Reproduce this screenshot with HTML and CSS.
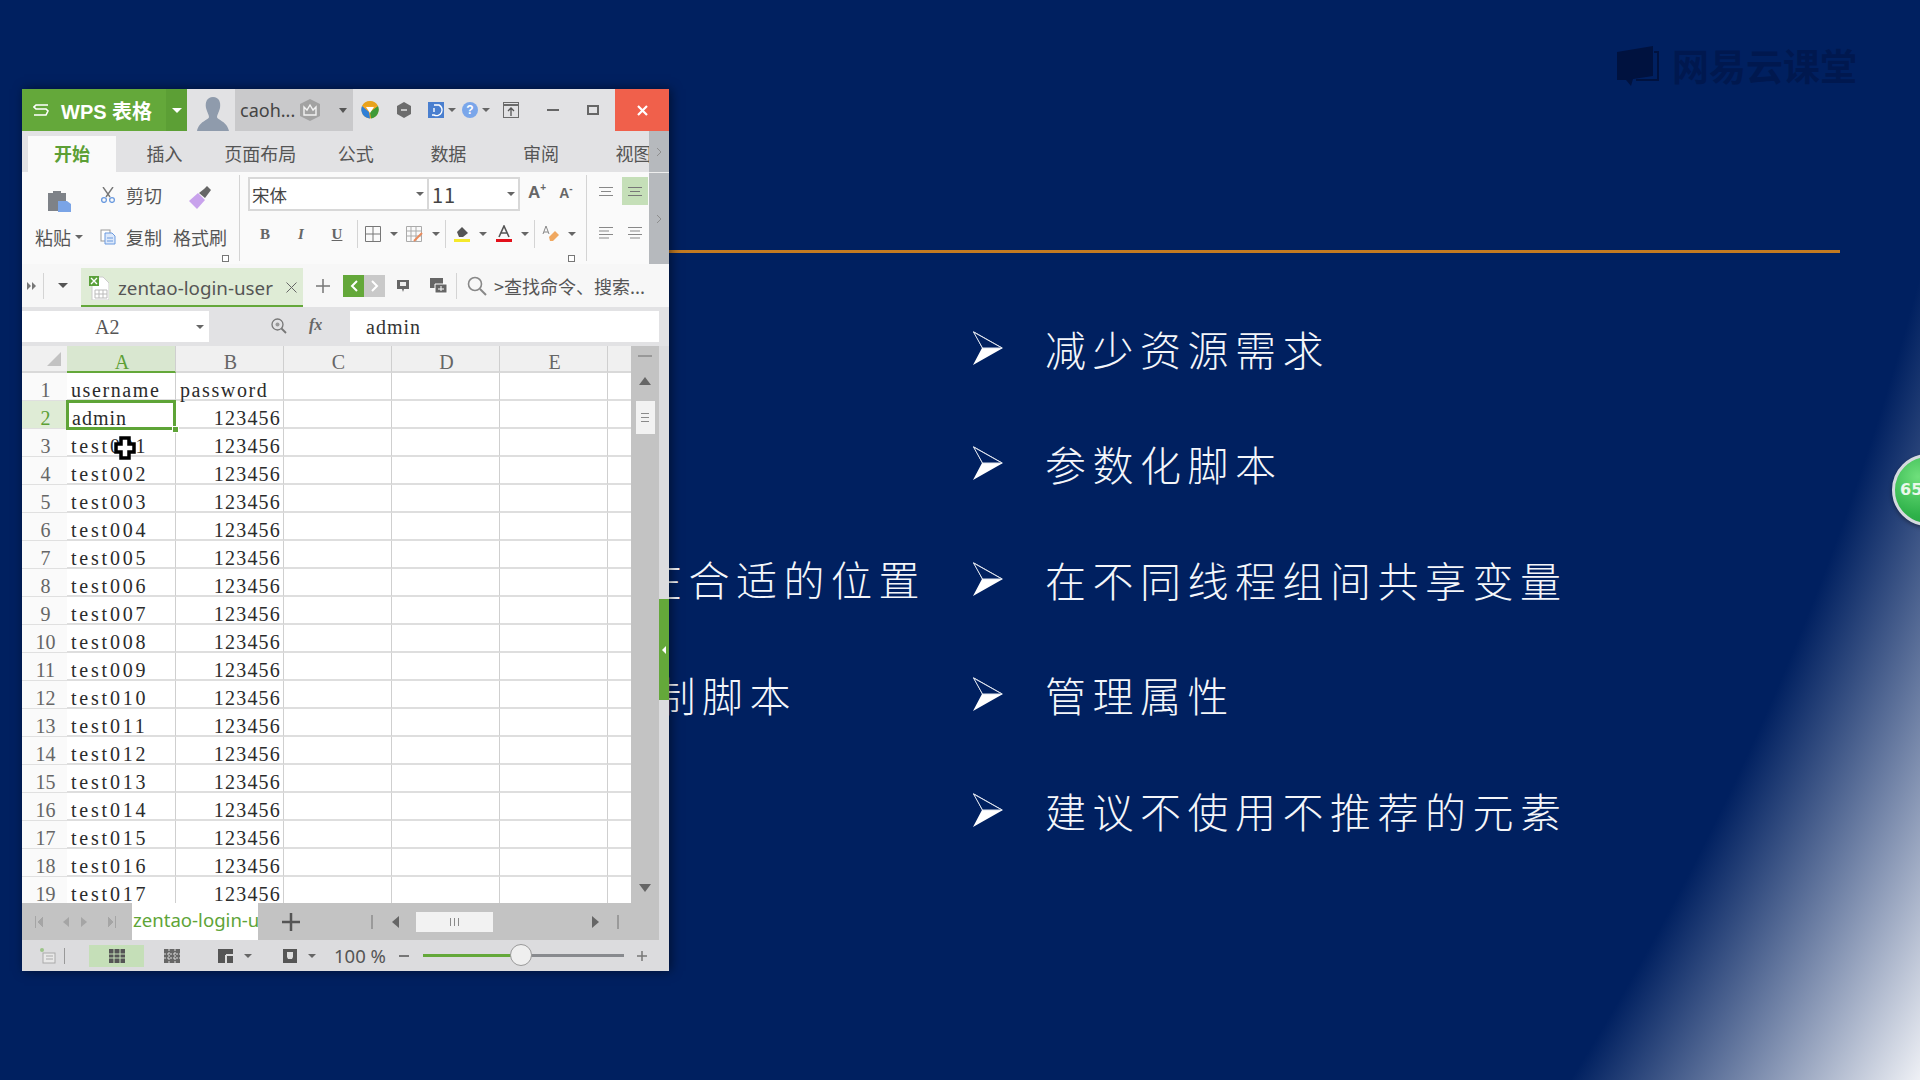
FILE: index.html
```html
<!DOCTYPE html>
<html lang="zh-CN">
<head>
  <meta charset="UTF-8">
  <title>WPS 表格</title>
  <link rel="stylesheet" href="styles.css">
</head>
<body>
<!-- Slide behind the window -->
<div class="slide">
  <div class="slide-rule"></div>
  <div class="slide-body">
    <div class="left-col">
      <div class="left-line"></div>
      <div class="left-line"></div>
      <div class="left-line">在合适的位置</div>
      <div class="left-line short">录制脚本</div>
    </div>
    <ul class="points">
      <li><svg class="arrow" viewBox="0 0 30 34"><path d="M0 0 30 17 0 34 9 17Z" fill="#fff"/><path d="M.5 1 29 17H9.500Z" fill="#002060" stroke="#dfe4ee" stroke-width="1"/></svg>减少资源需求</li>
      <li><svg class="arrow" viewBox="0 0 30 34"><path d="M0 0 30 17 0 34 9 17Z" fill="#fff"/><path d="M.5 1 29 17H9.500Z" fill="#002060" stroke="#dfe4ee" stroke-width="1"/></svg>参数化脚本</li>
      <li><svg class="arrow" viewBox="0 0 30 34"><path d="M0 0 30 17 0 34 9 17Z" fill="#fff"/><path d="M.5 1 29 17H9.500Z" fill="#002060" stroke="#dfe4ee" stroke-width="1"/></svg>在不同线程组间共享变量</li>
      <li><svg class="arrow" viewBox="0 0 30 34"><path d="M0 0 30 17 0 34 9 17Z" fill="#fff"/><path d="M.5 1 29 17H9.500Z" fill="#002060" stroke="#dfe4ee" stroke-width="1"/></svg>管理属性</li>
      <li><svg class="arrow" viewBox="0 0 30 34"><path d="M0 0 30 17 0 34 9 17Z" fill="#fff"/><path d="M.5 1 29 17H9.500Z" fill="#002060" stroke="#dfe4ee" stroke-width="1"/></svg>建议不使用不推荐的元素</li>
    </ul>
  </div>
  <div class="watermark">
    <svg width="44" height="44" viewBox="0 0 44 44"><path d="M1 9 37 3V33L17 36 15 43 10 37H1Z" fill="#00123f"/><path d="M38 9H42V37H20" fill="none" stroke="#00123f" stroke-width="2"/></svg>
    <span>网易云课堂</span>
  </div>
  <div class="ball">65</div>
</div>

<!-- WPS window -->
<div class="window">
  <div class="titlebar">
    <div class="brand">
      <svg class="brand-s" width="16" height="12" viewBox="0 0 16 12"><path d="M15 1H3L1 3 3 5H13L15 7 13 11H1" fill="none" stroke="#fff" stroke-width="1.600"/></svg>
      <span>WPS 表格</span>
    </div>
    <div class="brand-caret"><i class="caret white"></i></div>
    <div class="avatar">
      <svg width="32" height="34" viewBox="0 0 32 34"><path d="M16 0C22 0 24 5 23 11 22 15 20 18 20 20 20 23 30 24 32 34H0C2 24 12 23 12 20 12 18 10 15 9 11 8 5 10 0 16 0Z" fill="#8f9bac"/></svg>
    </div>
    <div class="user">
      <span>caoh...</span>
      <svg class="crown" width="22" height="24" viewBox="0 0 22 24"><path d="M11 1 21 6V18L11 23 1 18V6Z" fill="#a2a2a2"/><path d="M5 9 8 12 11 7 14 12 17 9V17H5Z" fill="none" stroke="#f2f2f2" stroke-width="1.400"/></svg>
      <i class="caret"></i>
    </div>
    <div class="title-tools">
      <svg class="t-color" width="18" height="18" viewBox="0 0 18 18"><circle cx="9" cy="9" r="8.500" fill="#f5a623"/><path d="M1 5A9 9 0 0 1 17 5H9Z" fill="#e8a21c"/><path d="M17 5A9 9 0 0 1 10 17.500L9 11Z" fill="#3f9a38"/><path d="M1 5A9 9 0 0 0 9 17.500L8 11Z" fill="#2f7fd6"/><path d="M5 6H13L9 12Z" fill="#fff"/></svg>
      <svg class="t-hex" width="14" height="16" viewBox="0 0 14 16"><path d="M7 0 14 4V12L7 16 0 12V4Z" fill="#6c6c6c"/><path d="M4 8H10" stroke="#ddd" stroke-width="1.600"/></svg>
      <svg class="t-skin" width="16" height="16" viewBox="0 0 16 16"><rect width="16" height="16" fill="#4a7fcf"/><path d="M6 3H11A5 5 0 0 1 6 13H4M6 6V10" fill="none" stroke="#fff" stroke-width="1.400"/></svg>
      <i class="caret small"></i>
      <span class="t-help">?</span>
      <i class="caret small"></i>
      <svg class="t-up" width="16" height="16" viewBox="0 0 16 16"><rect x=".5" y=".5" width="15" height="15" fill="none" stroke="#6b6b6b"/><path d="M0 3H16" stroke="#6b6b6b" stroke-width="2"/><path d="M8 14V6M5 9 8 6 11 9" fill="none" stroke="#555" stroke-width="1.300"/></svg>
    </div>
    <div class="win-btn"><svg width="12" height="2" viewBox="0 0 12 2"><rect width="12" height="2" fill="#666"/></svg></div>
    <div class="win-btn"><svg width="12" height="10" viewBox="0 0 12 10"><rect x="1" y="1" width="10" height="8" fill="none" stroke="#666" stroke-width="2"/></svg></div>
    <div class="close-btn"><svg width="11" height="11" viewBox="0 0 11 11"><path d="M1 1 10 10M10 1 1 10" stroke="#fff" stroke-width="2.200"/></svg></div>
  </div>

  <div class="menu">
    <div class="menu-tab active">开始</div>
    <div class="menu-tab">插入</div>
    <div class="menu-tab wide">页面布局</div>
    <div class="menu-tab">公式</div>
    <div class="menu-tab">数据</div>
    <div class="menu-tab">审阅</div>
    <div class="menu-tab">视图</div>
    <div class="side-scroll"><svg width="6" height="10" viewBox="0 0 6 10"><path d="M1 1 5 5 1 9" fill="none" stroke="#8e8e8e"/></svg></div>
  </div>

  <div class="ribbon">
    <div class="group clipboard">
      <div class="paste-icon">
        <svg width="26" height="24" viewBox="0 0 26 24"><path d="M2 4H7V2H15V4H20V22H2Z" fill="#7e8288"/><path d="M12 12H21L25 15V23H12Z" fill="#7aa4e6"/></svg>
      </div>
      <div class="clip-item"><svg width="16" height="16" viewBox="0 0 16 16"><path d="M3 0 10 10M13 0 6 10" stroke="#777" stroke-width="1.400"/><circle cx="4" cy="13" r="2.400" fill="none" stroke="#6a9adf" stroke-width="1.300"/><circle cx="12" cy="13" r="2.400" fill="none" stroke="#6a9adf" stroke-width="1.300"/></svg><span>剪切</span></div>
      <div class="brush-icon"><svg width="24" height="24" viewBox="0 0 24 24"><path d="M1 15 10 7 17 14 9 23Z" fill="#c8a2ec"/><path d="M11 7 16 3 19 0 23 4 20 8 17 12Z" fill="#666"/></svg></div>
      <div class="paste-label"><span>粘贴</span><i class="caret small"></i></div>
      <div class="clip-item"><svg width="16" height="16" viewBox="0 0 16 16"><rect x="1" y="1" width="9" height="11" fill="#fff" stroke="#999"/><path d="M5 4H12L15 7V15H5Z" fill="#dce8fa" stroke="#6a9adf"/><path d="M7 9H13M7 12H13" stroke="#6a9adf"/></svg><span>复制</span></div>
      <div class="clip-text">格式刷</div>
      <i class="launcher"></i>
    </div>

    <div class="group font-group">
      <div class="font-row">
        <div class="font-box">
          <div class="font-name"><span>宋体</span><i class="caret small"></i></div>
          <div class="font-size"><span>11</span><i class="caret small"></i></div>
        </div>
        <span class="size-up">A<sup>+</sup></span>
        <span class="size-down">A<sup>-</sup></span>
      </div>
      <div class="font-row second">
        <span class="ico fmt bold">B</span>
        <span class="ico fmt italic">I</span>
        <span class="ico fmt under">U</span>
        <i class="vsep"></i>
        <span class="ico"><svg width="16" height="16" viewBox="0 0 16 16"><path d="M.5.5H15.500V15.500H.5ZM8 0V16M0 8H16" fill="none" stroke="#777"/></svg></span>
        <span class="slot"><i class="caret small"></i></span>
        <span class="ico"><svg width="18" height="16" viewBox="0 0 18 16"><path d="M.5.5H15.500V15.500H.5ZM5 0V16M10 0V16M0 5H16M0 10H16" fill="none" stroke="#aaa"/><path d="M8 15 16 7" stroke="#e98a5b" stroke-width="2"/></svg></span>
        <span class="slot"><i class="caret small"></i></span>
        <i class="vsep"></i>
        <span class="ico gap"><svg width="16" height="18" viewBox="0 0 16 18"><path d="M3 7 8 2 14 8 9 12H5Z" fill="#555"/><rect y="14" width="16" height="3" fill="#f5e92b"/></svg></span>
        <span class="slot"><i class="caret small"></i></span>
        <span class="ico"><svg width="16" height="18" viewBox="0 0 16 18"><path d="M3 12 8 1 13 12M5 8H11" fill="none" stroke="#555" stroke-width="1.600"/><rect y="14" width="16" height="3" fill="#e3101a"/></svg></span>
        <span class="slot"><i class="caret small"></i></span>
        <i class="vsep"></i>
        <span class="ico gap"><svg width="18" height="18" viewBox="0 0 18 18"><path d="M1 9 4 1 7 9M2 7H6" fill="none" stroke="#888"/><path d="M7 12 13 6 17 10 11 16H8Z" fill="#f0a860"/></svg></span>
        <span class="slot"><i class="caret small"></i></span>
      </div>
      <i class="launcher"></i>
    </div>

    <div class="group align-group">
      <span class="align-btn"><svg width="14" height="9" viewBox="0 0 14 9"><path d="M0 .5H14M2 4.500H12M0 8.500H14" stroke="#888"/></svg></span>
      <span class="align-btn on"><svg width="14" height="9" viewBox="0 0 14 9"><path d="M0 .5H14M2 4.500H12M0 8.500H14" stroke="#777"/></svg></span>
      <span class="align-btn"><svg width="14" height="12" viewBox="0 0 14 12"><path d="M0 .5H14M0 4H10M0 7.500H14M0 11H10" stroke="#888"/></svg></span>
      <span class="align-btn"><svg width="14" height="12" viewBox="0 0 14 12"><path d="M0 .5H14M2 4H12M0 7.500H14M2 11H12" stroke="#888"/></svg></span>
    </div>
    <div class="side-scroll tall"><svg width="6" height="10" viewBox="0 0 6 10"><path d="M1 1 5 5 1 9" fill="none" stroke="#8e8e8e"/></svg></div>
  </div>

  <div class="docbar">
    <span class="dock-more"><svg width="10" height="8" viewBox="0 0 10 8"><path d="M0 0 4 4 0 8ZM5 0 9 4 5 8Z" fill="#777"/></svg></span>
    <i class="vsep tall"></i>
    <span class="dock-list"><i class="caret"></i></span>
    <div class="doc-tab">
      <svg width="20" height="24" viewBox="0 0 20 24"><path d="M3 1H14L20 7V24H3Z" fill="#fff" stroke="#ccc"/><rect y="0" width="10" height="10" fill="#5aa03a"/><path d="M2 2 8 8M8 2 2 8" stroke="#fff" stroke-width="1.400"/><path d="M6 14H18V22H6ZM10 14V22M14 14V22M6 18H18" fill="none" stroke="#bbb"/></svg>
      <span class="doc-name">zentao-login-user</span>
      <svg class="doc-x" width="11" height="11" viewBox="0 0 11 11"><path d="M.5.5 10.500 10.500M10.500.5.5 10.500" stroke="#666"/></svg>
    </div>
    <svg class="doc-add" width="14" height="14" viewBox="0 0 14 14"><path d="M7 0V14M0 7H14" stroke="#777" stroke-width="1.500"/></svg>
    <span class="nav-btn green"><svg width="8" height="12" viewBox="0 0 8 12"><path d="M7 1 2 6 7 11" fill="none" stroke="#fff" stroke-width="2"/></svg></span>
    <span class="nav-btn"><svg width="8" height="12" viewBox="0 0 8 12"><path d="M1 1 6 6 1 11" fill="none" stroke="#fff" stroke-width="2"/></svg></span>
    <svg class="dock-screen" width="14" height="14" viewBox="0 0 14 14"><path d="M1 1H13V10H8L7 13 6 10H1Z" fill="#666"/><rect x="4" y="3" width="6" height="4" fill="#eee"/></svg>
    <svg class="dock-save" width="18" height="16" viewBox="0 0 18 16"><path d="M0 0H13V10H0Z" fill="#666"/><path d="M5 6H17V15H5Z" fill="#666" stroke="#fff"/><path d="M11 8V13M8 11H14" stroke="#fff"/></svg>
    <i class="vsep tall"></i>
    <svg class="dock-search" width="20" height="20" viewBox="0 0 20 20"><circle cx="8" cy="8" r="6.500" fill="none" stroke="#888" stroke-width="1.600"/><path d="M13 13 19 19" stroke="#888" stroke-width="2"/></svg>
    <span class="dock-find">&gt;查找命令、搜索...</span>
  </div>

  <div class="formulabar">
    <div class="name-box"><span>A2</span><i class="caret small"></i></div>
    <svg class="fx-zoom" width="16" height="16" viewBox="0 0 16 16"><circle cx="6.500" cy="6.500" r="5.500" fill="none" stroke="#777" stroke-width="1.300"/><circle cx="6.500" cy="6.500" r="2" fill="#999"/><path d="M10.500 10.500 15 15" stroke="#777" stroke-width="1.800"/></svg>
    <span class="fx">fx</span>
    <div class="formula-input">admin</div>
  </div>

  <div class="sheet">
    <div class="grid">
      <div class="row head">
        <div class="corner"><svg width="14" height="14" viewBox="0 0 14 14"><path d="M14 0V14H0Z" fill="#c2c2c2"/></svg></div>
        <div class="col sel">A</div><div class="col">B</div><div class="col">C</div><div class="col">D</div><div class="col">E</div><div class="col"></div>
      </div>
      <div class="row"><div class="num">1</div><div class="cell wide">username</div><div class="cell wide">password</div><div class="cell"></div><div class="cell"></div><div class="cell"></div><div class="cell"></div></div>
      <div class="row"><div class="num sel">2</div><div class="cell active">admin<i class="handle"></i></div><div class="cell r">123456</div><div class="cell"></div><div class="cell"></div><div class="cell"></div><div class="cell"></div></div>
      <div class="row"><div class="num">3</div><div class="cell">test001</div><div class="cell r">123456</div><div class="cell"></div><div class="cell"></div><div class="cell"></div><div class="cell"></div></div>
      <div class="row"><div class="num">4</div><div class="cell">test002</div><div class="cell r">123456</div><div class="cell"></div><div class="cell"></div><div class="cell"></div><div class="cell"></div></div>
      <div class="row"><div class="num">5</div><div class="cell">test003</div><div class="cell r">123456</div><div class="cell"></div><div class="cell"></div><div class="cell"></div><div class="cell"></div></div>
      <div class="row"><div class="num">6</div><div class="cell">test004</div><div class="cell r">123456</div><div class="cell"></div><div class="cell"></div><div class="cell"></div><div class="cell"></div></div>
      <div class="row"><div class="num">7</div><div class="cell">test005</div><div class="cell r">123456</div><div class="cell"></div><div class="cell"></div><div class="cell"></div><div class="cell"></div></div>
      <div class="row"><div class="num">8</div><div class="cell">test006</div><div class="cell r">123456</div><div class="cell"></div><div class="cell"></div><div class="cell"></div><div class="cell"></div></div>
      <div class="row"><div class="num">9</div><div class="cell">test007</div><div class="cell r">123456</div><div class="cell"></div><div class="cell"></div><div class="cell"></div><div class="cell"></div></div>
      <div class="row"><div class="num">10</div><div class="cell">test008</div><div class="cell r">123456</div><div class="cell"></div><div class="cell"></div><div class="cell"></div><div class="cell"></div></div>
      <div class="row"><div class="num">11</div><div class="cell">test009</div><div class="cell r">123456</div><div class="cell"></div><div class="cell"></div><div class="cell"></div><div class="cell"></div></div>
      <div class="row"><div class="num">12</div><div class="cell">test010</div><div class="cell r">123456</div><div class="cell"></div><div class="cell"></div><div class="cell"></div><div class="cell"></div></div>
      <div class="row"><div class="num">13</div><div class="cell">test011</div><div class="cell r">123456</div><div class="cell"></div><div class="cell"></div><div class="cell"></div><div class="cell"></div></div>
      <div class="row"><div class="num">14</div><div class="cell">test012</div><div class="cell r">123456</div><div class="cell"></div><div class="cell"></div><div class="cell"></div><div class="cell"></div></div>
      <div class="row"><div class="num">15</div><div class="cell">test013</div><div class="cell r">123456</div><div class="cell"></div><div class="cell"></div><div class="cell"></div><div class="cell"></div></div>
      <div class="row"><div class="num">16</div><div class="cell">test014</div><div class="cell r">123456</div><div class="cell"></div><div class="cell"></div><div class="cell"></div><div class="cell"></div></div>
      <div class="row"><div class="num">17</div><div class="cell">test015</div><div class="cell r">123456</div><div class="cell"></div><div class="cell"></div><div class="cell"></div><div class="cell"></div></div>
      <div class="row"><div class="num">18</div><div class="cell">test016</div><div class="cell r">123456</div><div class="cell"></div><div class="cell"></div><div class="cell"></div><div class="cell"></div></div>
      <div class="row"><div class="num">19</div><div class="cell">test017</div><div class="cell r">123456</div><div class="cell"></div><div class="cell"></div><div class="cell"></div><div class="cell"></div></div>
      <svg class="pointer" width="22" height="24" viewBox="0 0 22 24"><path d="M7 2H15V8H20V16H15V22H7V16H2V8H7Z" fill="#fff" stroke="#000" stroke-width="3.500"/></svg>
    </div>
    <div class="vscroll">
      <i class="vs-dash"></i>
      <i class="tri up"></i>
      <div class="vs-thumb"><i></i><i></i><i></i></div>
      <div class="spacer"></div>
      <i class="tri down"></i>
    </div>
    <div class="side-strip"><div class="side-green"><i class="tri-left"></i></div></div>
  </div>

  <div class="sheetbar">
    <div class="sheet-nav">
      <svg width="8" height="12" viewBox="0 0 8 12"><path d="M.5 0V12M8 1 3 6 8 11Z" stroke="#a5a5a5" fill="#a5a5a5"/></svg>
      <svg width="6" height="12" viewBox="0 0 6 12"><path d="M6 1 0 6 6 11Z" fill="#a5a5a5"/></svg>
      <svg width="6" height="12" viewBox="0 0 6 12"><path d="M0 1 6 6 0 11Z" fill="#a5a5a5"/></svg>
      <svg width="8" height="12" viewBox="0 0 8 12"><path d="M7.500 0V12M0 1 5 6 0 11Z" stroke="#a5a5a5" fill="#a5a5a5"/></svg>
    </div>
    <div class="sheet-tab">zentao-login-u</div>
    <svg class="sheet-add" width="18" height="18" viewBox="0 0 18 18"><path d="M9 0V18M0 9H18" stroke="#555" stroke-width="2.500"/></svg>
    <i class="hs-bar first"></i>
    <i class="hs-left"></i>
    <div class="hs-thumb"><i></i><i></i><i></i></div>
    <i class="hs-right"></i>
    <i class="hs-bar"></i>
    <div class="side-strip"></div>
  </div>

  <div class="statusbar">
    <svg class="st-first" width="16" height="16" viewBox="0 0 16 16"><rect x="3" y="5" width="12" height="10" fill="#e8e8e8" stroke="#aaa"/><path d="M6 8H13M6 11H13" stroke="#aaa"/><circle cx="2" cy="2" r="2" fill="#9cc48a"/></svg>
    <i class="vsep status"></i>
    <div class="view-btn on"><svg width="16" height="14" viewBox="0 0 16 14"><path d="M0 0H16V14H0Z" fill="#555"/><path d="M5 0V14M11 0V14M0 5H16M0 9H16" stroke="#c5dfb8"/></svg></div>
    <div class="view-btn"><svg width="16" height="14" viewBox="0 0 16 14"><path d="M0 0H16V14H0Z" fill="#666"/><path d="M5 0V14M11 0V14M0 5H16M0 9H16" stroke="#ddd" stroke-dasharray="2 1"/></svg></div>
    <div class="view-btn drop"><svg width="15" height="14" viewBox="0 0 15 14"><rect width="15" height="14" fill="#555"/><path d="M8 6H15M8 6V14" stroke="#ddd" stroke-width="2"/></svg><i class="caret small"></i></div>
    <div class="view-btn drop"><svg width="14" height="14" viewBox="0 0 14 14"><rect width="14" height="14" fill="#555"/><path d="M4 3H10V8L9 10H5L4 8Z" fill="#ddd"/></svg><i class="caret small"></i></div>
    <span class="zoom-val">100 %</span>
    <span class="zoom-minus"></span>
    <div class="slider"><div class="slider-fill"></div><div class="slider-knob"></div></div>
    <svg class="zoom-plus" width="10" height="10" viewBox="0 0 10 10"><path d="M5 0V10M0 5H10" stroke="#777" stroke-width="1.500"/></svg>
  </div>
</div>
</body>
</html>
```

FILE: styles.css
```css
* {
  box-sizing: border-box;
}
body {
  margin: 0;
  width: 1920px;
  height: 1080px;
  overflow: hidden;
  font-family: "Noto Sans CJK SC", "Noto Sans", sans-serif;
}

/* Slide */
.slide {
  position: relative;
  width: 1920px;
  height: 1080px;
  padding-top: 250px;
  overflow: hidden;
  background: radial-gradient(circle 3200px at -883px -465px, #002060 0, #002060 90.6%, #eef0f5 100%);
}
.slide-rule {
  width: 1240px;
  height: 3px;
  margin-left: 600px;
  background: #c27a22;
}
.slide-body {
  display: flex;
  margin-top: 37px;
}
.left-col {
  width: 973px;
  padding-right: 47px;
  flex: none;
}
.left-line {
  height: 115.500px;
  line-height: 115.500px;
  text-align: right;
  font-size: 41px;
  letter-spacing: 6.500px;
  font-weight: 300;
  color: #f4f6fa;
  white-space: nowrap;
}
.left-line.short {
  padding-right: 129px;
}
.points {
  list-style: none;
  margin: 0;
  padding: 0;
}
.points li {
  display: flex;
  align-items: center;
  height: 115.500px;
  font-size: 41px;
  letter-spacing: 6.500px;
  font-weight: 300;
  color: #f4f6fa;
  white-space: nowrap;
}
.arrow {
  width: 30px;
  height: 34px;
  margin-right: 42px;
}
.watermark {
  position: absolute;
  left: 1616px;
  top: 43px;
  display: flex;
  align-items: center;
  gap: 12px;
  color: #00184f;
}
.watermark span {
  font-size: 37px;
  line-height: 44px;
  font-weight: 700;
}
.ball {
  position: absolute;
  left: 1892px;
  top: 454px;
  width: 72px;
  height: 72px;
  padding-left: 5px;
  border-radius: 50%;
  border: 3px solid #d5dadf;
  background: radial-gradient(circle at 35% 30%, #6fe07c, #2fb24a 60%, #1e9a3b);
  box-shadow: 0 2px 4px rgba(0, 0, 0, 0.4);
  color: #eaf8ea;
  font: bold 16px/66px "DejaVu Sans", sans-serif;
}

/* Window */
.window {
  position: absolute;
  left: 22px;
  top: 89px;
  width: 647px;
  height: 882px;
  display: flex;
  flex-direction: column;
  background: #fff;
  box-shadow: 2px 0 10px rgba(0, 0, 0, 0.5);
}
.caret {
  display: inline-block;
  width: 0;
  height: 0;
  border-left: 5px solid transparent;
  border-right: 5px solid transparent;
  border-top: 5px solid #555;
}
.caret.small {
  border-left-width: 4px;
  border-right-width: 4px;
  border-top-width: 4px;
  border-top-color: #666;
}
.caret.white {
  border-top-color: #fff;
}
.vsep {
  display: block;
  width: 1px;
  height: 28px;
  flex: none;
  background: #d4d4d4;
}
.launcher {
  position: absolute;
  width: 7px;
  height: 7px;
  border: 1px solid #777;
  background: #fff;
}

/* Title bar */
.titlebar {
  display: flex;
  height: 42px;
  flex: none;
  background: #e2e2e4;
}
.brand {
  display: flex;
  align-items: center;
  width: 144px;
  padding-left: 11px;
  gap: 12px;
  background: #64a83a;
  color: #fff;
  font: bold 20px "Liberation Sans", "Noto Sans CJK SC", sans-serif;
  white-space: nowrap;
}
.brand-caret {
  display: flex;
  align-items: center;
  justify-content: center;
  width: 21px;
  background: #5c9f35;
}
.avatar {
  display: flex;
  align-items: flex-end;
  justify-content: center;
  width: 48px;
  padding-left: 4px;
}
.user {
  display: flex;
  align-items: center;
  width: 118px;
  padding-left: 5px;
  background: #c9c9cb;
  color: #444;
  font: 18px "Noto Sans", sans-serif;
}
.crown {
  margin-left: 4px;
}
.user .caret {
  margin-left: 18px;
  border-left-width: 4px;
  border-right-width: 4px;
}
.title-tools {
  display: flex;
  align-items: center;
  width: 180px;
  padding-left: 8px;
}
.t-hex {
  margin-left: 18px;
}
.t-skin {
  margin-left: 17px;
}
.title-tools .caret {
  margin-left: 4px;
}
.t-help {
  width: 16px;
  height: 16px;
  margin-left: 6px;
  border-radius: 50%;
  background: #7aa6ea;
  color: #fff;
  font: bold 12px/16px "Liberation Sans", sans-serif;
  text-align: center;
}
.t-up {
  margin-left: 13px;
}
.win-btn {
  display: flex;
  align-items: center;
  justify-content: center;
  width: 41px;
  margin-left: -1px;
}
.close-btn {
  display: flex;
  align-items: center;
  justify-content: center;
  width: 54px;
  margin-left: auto;
  background: #f0604b;
}

/* Menu tabs */
.menu {
  position: relative;
  display: flex;
  align-items: flex-end;
  flex: none;
  height: 41px;
  padding-left: 6px;
  gap: 4.600px;
  overflow: hidden;
  background: #e2e2e4;
}
.menu-tab {
  flex: none;
  width: 88px;
  height: 36px;
  line-height: 35px;
  text-align: center;
  font-size: 18px;
  color: #555;
}
.menu-tab.wide {
  width: 94px;
}
.menu-tab.active {
  background: #fafafa;
  color: #5c9f35;
  font-weight: 700;
}
.side-scroll {
  position: absolute;
  right: 0;
  top: 0;
  bottom: 0;
  display: flex;
  align-items: center;
  justify-content: center;
  width: 20px;
  background: #b6b9bd;
}
.side-scroll.tall {
  border-top: 1px solid #eee;
}

/* Ribbon */
.ribbon {
  position: relative;
  display: flex;
  flex: none;
  height: 92px;
  background: #fafafa;
}
.group {
  position: relative;
  flex: none;
  color: #555;
}
.clipboard {
  display: grid;
  grid-template-columns: 74px 76px 68px;
  grid-template-rows: 40px 44px;
  width: 218px;
  height: 86px;
  border-right: 1px solid #d4d4d4;
  margin-top: 3px;
  font-size: 18px;
  white-space: nowrap;
}
.clipboard .launcher {
  left: 200px;
  top: 80px;
}
.paste-icon,
.brush-icon {
  display: flex;
  align-items: center;
  justify-content: center;
}
.paste-icon {
  padding-top: 12px;
}
.brush-icon {
  padding: 6px 12px 0 0;
}
.clip-item {
  display: flex;
  align-items: center;
  gap: 10px;
  padding-left: 4px;
}
.paste-label {
  display: flex;
  align-items: center;
  gap: 4px;
  padding-left: 13px;
}
.clip-text {
  display: flex;
  align-items: center;
  padding-left: 1px;
}
.font-group {
  width: 347px;
  height: 86px;
  margin-top: 3px;
  padding-left: 8px;
  border-right: 1px solid #d4d4d4;
}
.font-group .launcher {
  left: 328px;
  top: 80px;
}
.font-row {
  display: flex;
  align-items: center;
}
.font-row.second {
  margin-top: 8px;
  margin-left: -1px;
  height: 30px;
}
.font-box {
  display: flex;
  width: 272px;
  height: 34px;
  margin-top: 2px;
  border: 2px solid #d8d8d8;
  background: #fff;
  font-size: 17.500px;
  color: #444;
}
.font-name,
.font-size {
  display: flex;
  align-items: center;
  justify-content: space-between;
  padding: 0 3px 0 2px;
}
.font-name {
  width: 179px;
  border-right: 2px solid #d8d8d8;
}
.font-size {
  flex: 1;
  padding-left: 3px;
  font-size: 20px;
  letter-spacing: 1px;
}
.size-up,
.size-down {
  font: 700 15px "Liberation Sans", sans-serif;
  color: #666;
}
.size-up {
  margin-left: 8px;
  font-size: 17px;
}
.size-down {
  margin-left: 13px;
  font-size: 14px;
}
.font-row sup {
  font-size: 10px;
  line-height: 0;
}
.ico {
  display: flex;
  align-items: center;
  justify-content: center;
  width: 24px;
  flex: none;
}
.ico.gap {
  margin-left: 4px;
}
.fmt {
  width: 36px;
  font: 700 15px "Liberation Serif", serif;
  color: #666;
}
.fmt.italic {
  font-style: italic;
}
.fmt.under {
  text-decoration: underline;
}
.font-row .vsep {
  margin: 0 3px 0 2px;
}
.slot {
  display: flex;
  align-items: center;
  justify-content: center;
  width: 18px;
  flex: none;
}
.font-row .slot + .vsep {
  margin: 0;
}
.align-group {
  display: grid;
  grid-template-columns: 29px 26px;
  grid-template-rows: 28px 28px;
  row-gap: 14px;
  margin: 5px 0 0 6px;
}
.align-btn {
  display: flex;
  align-items: center;
  justify-content: center;
  width: 26px;
}
.align-btn.on {
  background: #c5dfb8;
}

/* Document tab bar */
.docbar {
  display: flex;
  align-items: center;
  flex: none;
  height: 43px;
  padding-left: 5px;
  background: #f7f7f7;
}
.docbar .vsep.tall {
  height: 26px;
}
.dock-more {
  display: flex;
  width: 16px;
}
.dock-list {
  display: flex;
  justify-content: center;
  width: 37px;
}
.doc-tab {
  display: flex;
  align-items: center;
  align-self: stretch;
  width: 222px;
  margin-top: 4px;
  padding: 2px 0 0 8px;
  border-bottom: 2px solid #64a83a;
  background: #dfecd6;
}
.doc-name {
  margin-left: 9px;
  color: #555;
  font: 18.800px "Noto Sans", sans-serif;
  white-space: nowrap;
}
.doc-x {
  margin-left: 13px;
}
.doc-add {
  margin: 0 13px;
}
.nav-btn {
  display: flex;
  align-items: center;
  justify-content: center;
  width: 21px;
  height: 22px;
  background: #c9c9c9;
}
.nav-btn.green {
  background: #64a83a;
}
.dock-screen {
  margin-left: 11px;
}
.dock-save {
  margin: 0 8px 0 20px;
}
.dock-search {
  margin: 0 7px 0 10px;
}
.dock-find {
  padding-top: 1px;
  font-size: 18px;
  color: #555;
  white-space: nowrap;
}

/* Formula bar */
.formulabar {
  display: flex;
  align-items: flex-start;
  flex: none;
  height: 39px;
  padding: 4px 10px 0 0;
  background: #e2e2e4;
}
.name-box {
  position: relative;
  width: 187px;
  height: 31px;
  padding-left: 73px;
  background: #fff;
  font: 20px/33px "Liberation Serif", serif;
  color: #555;
}
.name-box .caret {
  position: absolute;
  right: 5px;
  top: 14px;
}
.fx-zoom {
  margin: 7px 0 0 62px;
}
.fx {
  margin: 5px 0 0 22px;
  color: #666;
  font: italic 700 16px "Liberation Serif", serif;
}
.formula-input {
  width: 309px;
  height: 31px;
  margin-left: auto;
  padding-left: 16px;
  background: #fff;
  font: 20px/33px "Liberation Serif", serif;
  letter-spacing: 1px;
  color: #333;
}

/* Sheet */
.sheet {
  display: flex;
  flex: none;
  height: 557px;
  overflow: hidden;
}
.grid {
  position: relative;
  width: 609px;
  flex: none;
  background: #fff;
}
.row {
  display: grid;
  grid-template-columns: 45px 109px 108px 108px 108px 108px 23px;
  grid-template-rows: 100%;
  width: 609px;
  height: 28px;
  font: 20px/28px "Liberation Serif", serif;
  color: #2b2b2b;
}
.row.head {
  height: 27px;
  background: #f0f0f0;
}
.corner {
  display: flex;
  align-items: flex-end;
  justify-content: flex-end;
  padding: 0 6px 5px 0;
  border-bottom: 2px solid #d9d9d9;
}
.col {
  padding: 2px 0 0 2px;
  text-align: center;
  line-height: 29px;
  color: #666;
  border-right: 1px solid #cfcfcf;
  border-bottom: 2px solid #d9d9d9;
}
.col:last-child {
  border-right: 0;
}
.col.sel {
  color: #5c9f35;
  background: #d9e7d0;
  border-bottom: 2px solid #64a83a;
}
.num {
  padding: 3px 0 0 2px;
  text-align: center;
  color: #666;
  border-bottom: 1px solid #e0e0e0;
  background: #fafafa;
}
.num.sel {
  color: #5c9f35;
  background: #dfecd6;
}
.cell {
  padding: 3px 0 0 4px;
  letter-spacing: 2.800px;
  white-space: nowrap;
  border-right: 1px solid #cfcfcf;
  border-bottom: 2px solid #dedede;
}
.cell:last-child {
  border-right: 0;
}
.cell.wide {
  letter-spacing: 1.600px;
}
.cell.r {
  padding-right: 2px;
  text-align: right;
  letter-spacing: 1.200px;
}
.cell.active {
  position: relative;
  margin: -1px 0 -1px -1px;
  padding: 1px 0 0 3px;
  letter-spacing: 1px;
  border: 3px solid #5ea437;
  z-index: 1;
}
.handle {
  position: absolute;
  right: -6px;
  bottom: -6px;
  width: 7px;
  height: 7px;
  background: #5ea437;
  border: 1px solid #fff;
}
.pointer {
  position: absolute;
  left: 92px;
  top: 90px;
  z-index: 2;
}
.vscroll {
  display: flex;
  flex-direction: column;
  align-items: center;
  width: 28px;
  flex: none;
  background: #c3c3c3;
}
.vs-dash {
  width: 14px;
  height: 2px;
  margin-top: 9px;
  background: #989898;
}
.tri {
  width: 0;
  height: 0;
  border-left: 6px solid transparent;
  border-right: 6px solid transparent;
}
.tri.up {
  margin-top: 20px;
  border-bottom: 8px solid #666;
}
.tri.down {
  margin-bottom: 11px;
  border-top: 8px solid #666;
}
.vs-thumb {
  display: flex;
  flex-direction: column;
  align-items: center;
  justify-content: center;
  gap: 3px;
  width: 19px;
  height: 33px;
  margin-top: 16px;
  background: #f2f2f2;
}
.vs-thumb i {
  width: 8px;
  height: 1px;
  background: #8a8a8a;
}
.spacer {
  flex: 1;
}
.side-strip {
  display: flex;
  flex-direction: column;
  width: 10px;
  flex: none;
  align-self: stretch;
  background: #dcdcde;
}
.side-green {
  display: flex;
  align-items: center;
  justify-content: center;
  height: 101px;
  margin-top: 253px;
  background: #64a83a;
}
.tri-left {
  border-top: 4px solid transparent;
  border-bottom: 4px solid transparent;
  border-right: 4px solid #fff;
}

/* Sheet tabs */
.sheetbar {
  display: flex;
  align-items: center;
  flex: none;
  height: 37px;
  background: #c3c3c3;
}
.sheet-nav {
  display: flex;
  align-items: center;
  width: 110px;
  padding-left: 13px;
}
.sheet-nav svg:nth-child(2) {
  margin-left: 20px;
}
.sheet-nav svg:nth-child(3) {
  margin-left: 12px;
}
.sheet-nav svg:nth-child(4) {
  margin-left: 21px;
}
.sheet-tab {
  align-self: stretch;
  width: 126px;
  padding-left: 1px;
  overflow: hidden;
  background: #fff;
  color: #5ea437;
  font: 18.600px/34px "Noto Sans", sans-serif;
  white-space: nowrap;
}
.sheet-add {
  margin-left: 24px;
}
.hs-bar {
  width: 2px;
  height: 14px;
  margin-left: 18px;
  background: #9a9a9a;
}
.hs-bar.first {
  margin-left: 71px;
}
.hs-left {
  margin-left: 19px;
  border-top: 6px solid transparent;
  border-bottom: 6px solid transparent;
  border-right: 7px solid #666;
}
.hs-thumb {
  display: flex;
  align-items: center;
  justify-content: center;
  gap: 3px;
  width: 77px;
  height: 20px;
  margin-left: 17px;
  background: #f2f2f2;
}
.hs-thumb i {
  width: 1px;
  height: 8px;
  background: #8a8a8a;
}
.hs-right {
  margin-left: 99px;
  border-top: 6px solid transparent;
  border-bottom: 6px solid transparent;
  border-left: 7px solid #666;
}
.sheetbar .side-strip {
  margin-left: auto;
}

/* Status bar */
.statusbar {
  display: flex;
  align-items: center;
  flex: none;
  height: 31px;
  padding-left: 18px;
  background: #dcdcde;
}
.st-first {
  margin-right: 8px;
}
.vsep.status {
  height: 16px;
  background: #999;
}
.view-btn {
  display: flex;
  align-items: center;
  justify-content: center;
  width: 55px;
  height: 22px;
  margin-left: 24px;
}
.view-btn + .view-btn {
  margin-left: 0;
}
.view-btn.on {
  background: #c5dfb8;
}
.view-btn.drop {
  width: 64px;
  gap: 11px;
  padding-left: 8px;
}
.zoom-val {
  padding-left: 7px;
  font: 18.500px "Noto Sans", sans-serif;
  color: #555;
  white-space: nowrap;
}
.zoom-minus {
  width: 10px;
  height: 2px;
  margin-left: 13px;
  background: #777;
}
.slider {
  position: relative;
  width: 201px;
  height: 3px;
  margin-left: 14px;
  background: #888a8e;
}
.slider-fill {
  width: 98px;
  height: 100%;
  background: #64a83a;
}
.slider-knob {
  position: absolute;
  left: 87px;
  top: -10px;
  width: 22px;
  height: 22px;
  border-radius: 50%;
  border: 1px solid #999;
  background: #efefef;
}
.zoom-plus {
  margin-left: 13px;
}
```
